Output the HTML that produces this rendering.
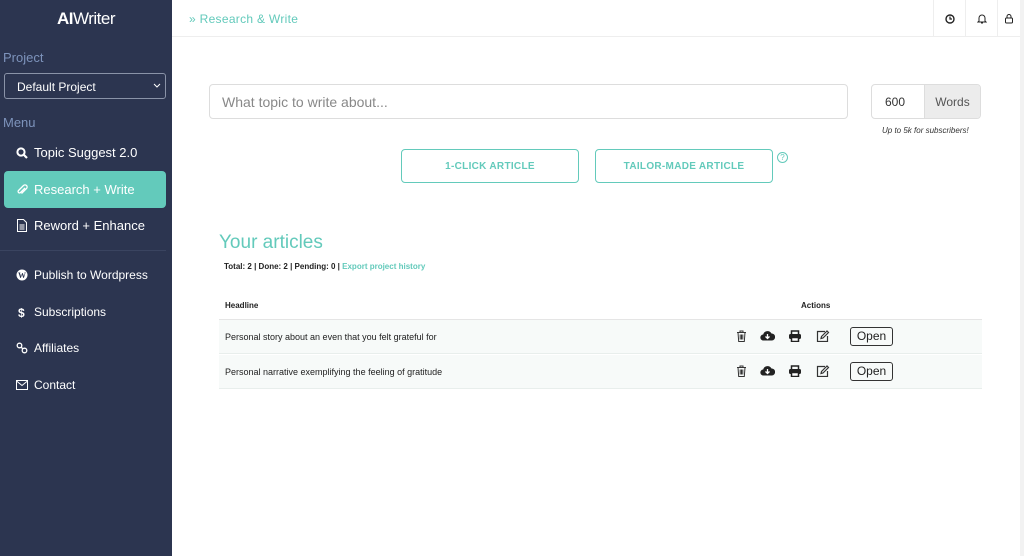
<!DOCTYPE html>
<html><head><style>
*{box-sizing:border-box;margin:0;padding:0}
body{width:1024px;height:556px;overflow:hidden;font-family:"Liberation Sans",sans-serif;background:#fff;position:relative}
.sb{position:absolute;left:0;top:0;width:172px;height:556px;background:#2c3550;color:#fff}
.logo{position:absolute;top:9px;left:0;width:172px;text-align:center;font-size:17px;letter-spacing:-0.5px}
.lbl{position:absolute;left:3px;color:#7d93bb;font-size:13px}
.sel{position:absolute;left:4px;top:73px;width:162px;height:26px;border:1px solid #8a93a8;border-radius:3px;font-size:12px;padding:6px 12px}
.sel svg{position:absolute;right:4px;top:9px}
.it{position:absolute;left:16px;font-size:13px;display:flex;align-items:center}
.it svg{margin-right:6px}
.act{position:absolute;left:4px;top:171px;width:162px;height:37px;background:#63cabb;border-radius:4px}
.sep{position:absolute;left:0;top:250px;width:166px;border-top:1px solid #3a4460}
.it.s{font-size:12px}
.top{position:absolute;left:172px;top:0;right:0;height:37px;border-bottom:1px solid #eee}
.bc{position:absolute;left:189px;top:12px;color:#63cabb;font-size:12px;letter-spacing:.3px}
.tb{position:absolute;top:0;width:32px;height:37px;border-left:1px solid #eee;display:flex;align-items:center;justify-content:center}
.inp{position:absolute;left:209px;top:84px;width:639px;height:35px;border:1px solid #ddd;border-radius:4px;color:#888;font-size:14px;padding:9px 12px}
.num{position:absolute;left:871px;top:84px;width:110px;height:35px;border:1px solid #ddd;border-radius:4px;font-size:12px;overflow:hidden}
.num span{position:absolute;top:10px;left:13px;color:#333}
.num b{position:absolute;left:52px;top:0;right:0;bottom:0;background:#ececec;border-left:1px solid #ddd;font-weight:normal;color:#555;text-align:center;line-height:34px}
.note{position:absolute;left:882px;top:126px;font-size:8px;font-style:italic;color:#333}
.btn{position:absolute;top:149px;height:34px;border:1px solid #63cabb;border-radius:4px;color:#63cabb;font-weight:bold;font-size:10px;display:flex;align-items:center;justify-content:center;letter-spacing:.3px}
h2{position:absolute;left:219px;top:232px;font-weight:normal;font-size:19px;color:#63cabb}
.st{position:absolute;left:224px;top:262px;font-size:8px;font-weight:bold;color:#222}
.st a{color:#63cabb}
.th{position:absolute;top:301px;font-size:8px;font-weight:bold;color:#222}
.tl{position:absolute;left:219px;width:763px}
.row{position:absolute;left:219px;width:763px;height:34px;background:#f7faf9;border-bottom:1px solid #e8eeec;font-size:9px;color:#222}
.row .t{position:absolute;left:6px;top:12px}
.ic{position:absolute;top:10px}
.open{position:absolute;left:631px;top:7px;width:43px;height:19px;border:1px solid #333;border-radius:3px;font-size:12px;text-align:center;line-height:17px}
</style></head><body>
<div class="sb">
<div class="logo"><b>AI</b>Writer</div>
<div class="lbl" style="top:50px">Project</div>
<div class="sel">Default Project<svg width="8" height="5" viewBox="0 0 8 5"><path d="M1 1l3 3 3-3" stroke="#fff" fill="none"/></svg></div>
<div class="lbl" style="top:115px">Menu</div>
<div class="it" style="top:145px"><svg width="12" height="12" viewBox="0 0 12 12"><circle cx="5" cy="5" r="3.6" stroke="#fff" stroke-width="2" fill="none"/><path d="M7.5 7.5l3.5 3.5" stroke="#fff" stroke-width="2.2"/></svg>Topic Suggest 2.0</div>
<div class="act"></div>
<div class="it" style="top:182px"><svg width="12" height="12" viewBox="0 0 12 12"><path d="M9 4L4.5 8.5a1.3 1.3 0 01-2-2L7.5 1.5a2 2 0 013 3L5.5 9.5" stroke="#fff" stroke-width="1.3" fill="none"/></svg>Research + Write</div>
<div class="it" style="top:218px"><svg width="12" height="13" viewBox="0 0 12 13"><path d="M1.5 .5h6l3 3v9h-9z" stroke="#fff" fill="none"/><path d="M3.5 6h5M3.5 8h5M3.5 10h5" stroke="#fff"/></svg>Reword + Enhance</div>
<div class="sep"></div>
<div class="it s" style="top:268px"><svg width="12" height="12" viewBox="0 0 12 12"><circle cx="6" cy="6" r="5.5" fill="#fff"/><text x="6" y="9" font-size="8" font-weight="bold" text-anchor="middle" fill="#2c3550" font-family="Liberation Serif">W</text></svg>Publish to Wordpress</div>
<div class="it s" style="top:305px"><svg width="12" height="12"><text x="2" y="11" font-size="12" font-weight="bold" fill="#fff">$</text></svg>Subscriptions</div>
<div class="it s" style="top:341px"><svg width="12" height="12" viewBox="0 0 12 12"><circle cx="3.5" cy="3.5" r="2.3" stroke="#fff" stroke-width="1.3" fill="none"/><circle cx="8.5" cy="8.5" r="2.3" stroke="#fff" stroke-width="1.3" fill="none"/><path d="M5 5l2 2" stroke="#fff" stroke-width="1.3"/></svg>Affiliates</div>
<div class="it s" style="top:378px"><svg width="12" height="10" viewBox="0 0 12 10"><rect x=".5" y=".5" width="11" height="9" stroke="#fff" fill="none"/><path d="M.5 1l5.5 4.5L11.5 1" stroke="#fff" fill="none"/></svg>Contact</div>
</div>
<div class="top"></div>
<div class="bc">» Research &amp; Write</div>
<div class="tb" style="left:933px"><svg width="10" height="10" viewBox="0 0 10 10"><circle cx="5" cy="5" r="4" stroke="#222" stroke-width="1.4" fill="none"/><path d="M5 2.5V5h2" stroke="#222" stroke-width="1.2" fill="none"/></svg></div>
<div class="tb" style="left:965px"><svg width="10" height="11" viewBox="0 0 10 11"><path d="M2 8V5a3 3 0 016 0v3l1 1H1z" stroke="#222" fill="none"/><path d="M4 10h2" stroke="#222"/></svg></div>
<div class="tb" style="left:997px;width:23px"><svg width="10" height="11" viewBox="0 0 10 11"><path d="M3 5V3.5a2 2 0 014 0V5" stroke="#222" fill="none"/><rect x="1.5" y="5" width="7" height="5" rx="1" stroke="#222" fill="none"/></svg></div>
<div class="inp">What topic to write about...</div>
<div class="num"><span>600</span><b>Words</b></div>
<div class="note">Up to 5k for subscribers!</div>
<div class="btn" style="left:401px;width:178px">1-CLICK ARTICLE</div>
<div class="btn" style="left:595px;width:178px">TAILOR-MADE ARTICLE</div>
<div style="position:absolute;left:777px;top:152px;width:11px;height:11px;border:1px solid #63cabb;border-radius:50%;color:#63cabb;font-size:8px;text-align:center;line-height:10px">?</div>
<h2>Your articles</h2>
<div class="st">Total: 2 | Done: 2 | Pending: 0 | <a>Export project history</a></div>
<div class="th" style="left:225px">Headline</div>
<div class="th" style="left:801px">Actions</div>
<div class="tl" style="top:319px;border-top:2px solid #e5e5e5"></div>
<div class="row" style="top:320px"><span class="t">Personal story about an even that you felt grateful for</span>
<svg class="ic" style="left:517px" width="11" height="12" viewBox="0 0 11 12"><path d="M1 2.5h9M4 2.5V1h3v1.5M2 2.5l.7 9h5.6l.7-9M4.2 4.5v5M5.5 4.5v5M6.8 4.5v5" stroke="#333" fill="none"/></svg>
<svg class="ic" style="left:541px" width="15" height="11" viewBox="0 0 15 11"><path d="M3.5 10.5a3 3 0 01-.3-6A4.5 4.5 0 0111.5 3.5a3.5 3.5 0 01.3 7z" fill="#222"/><path d="M7.5 4v4M5.5 6.5l2 2 2-2" stroke="#fff" stroke-width="1.3" fill="none"/></svg>
<svg class="ic" style="left:569px" width="14" height="12" viewBox="0 0 14 12"><path d="M3.5 4V1h7v3" stroke="#222" stroke-width="1.5" fill="none"/><rect x="1" y="4" width="12" height="5" rx="1.5" fill="#222"/><rect x="3.5" y="7.5" width="7" height="4" stroke="#222" stroke-width="1.5" fill="#fff"/></svg>
<svg class="ic" style="left:597px" width="14" height="12" viewBox="0 0 14 12"><path d="M9 1.5H1.5v10h10V6" stroke="#333" stroke-width="1.2" fill="none"/><path d="M5 8.5l.5-2L11 1l1.5 1.5L7 8z" stroke="#333" stroke-width="1.2" fill="none"/></svg>
<div class="open">Open</div></div>
<div class="row" style="top:355px"><span class="t">Personal narrative exemplifying the feeling of gratitude</span>
<svg class="ic" style="left:517px" width="11" height="12" viewBox="0 0 11 12"><path d="M1 2.5h9M4 2.5V1h3v1.5M2 2.5l.7 9h5.6l.7-9M4.2 4.5v5M5.5 4.5v5M6.8 4.5v5" stroke="#333" fill="none"/></svg>
<svg class="ic" style="left:541px" width="15" height="11" viewBox="0 0 15 11"><path d="M3.5 10.5a3 3 0 01-.3-6A4.5 4.5 0 0111.5 3.5a3.5 3.5 0 01.3 7z" fill="#222"/><path d="M7.5 4v4M5.5 6.5l2 2 2-2" stroke="#fff" stroke-width="1.3" fill="none"/></svg>
<svg class="ic" style="left:569px" width="14" height="12" viewBox="0 0 14 12"><path d="M3.5 4V1h7v3" stroke="#222" stroke-width="1.5" fill="none"/><rect x="1" y="4" width="12" height="5" rx="1.5" fill="#222"/><rect x="3.5" y="7.5" width="7" height="4" stroke="#222" stroke-width="1.5" fill="#fff"/></svg>
<svg class="ic" style="left:597px" width="14" height="12" viewBox="0 0 14 12"><path d="M9 1.5H1.5v10h10V6" stroke="#333" stroke-width="1.2" fill="none"/><path d="M5 8.5l.5-2L11 1l1.5 1.5L7 8z" stroke="#333" stroke-width="1.2" fill="none"/></svg>
<div class="open">Open</div></div>
<div style="position:absolute;right:0;top:0;width:4px;height:556px;background:#f2f2f2"></div>
</body></html>
